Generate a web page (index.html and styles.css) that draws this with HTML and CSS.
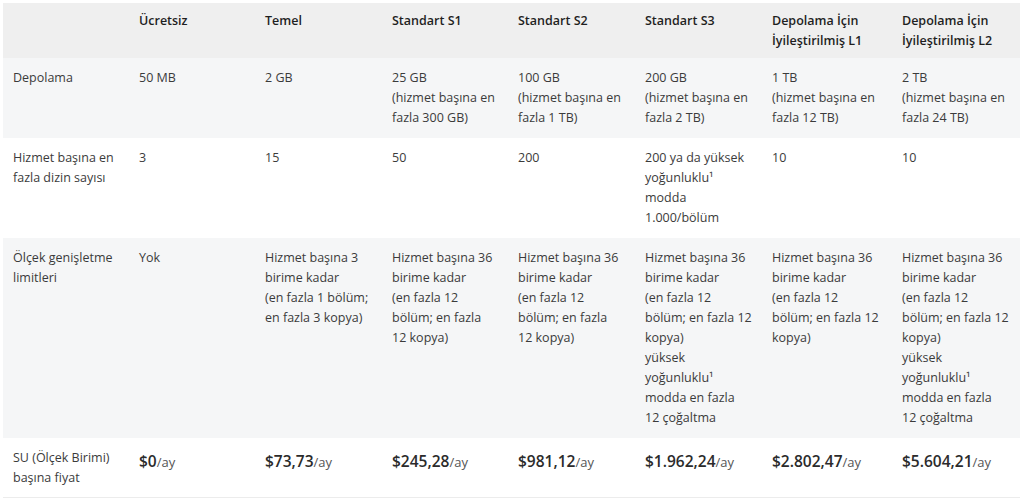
FILE: index.html
```html
<!DOCTYPE html>
<html lang="tr">
<head>
<meta charset="utf-8">
<link rel="stylesheet" href="styles.css">
</head>
<body>
<div class="wrap">
<table class="pricing">
  <colgroup>
    <col class="c0"><col class="c1"><col class="c2"><col class="c3"><col class="c4"><col class="c5"><col class="c6"><col class="c7">
  </colgroup>
  <thead>
    <tr>
      <th></th>
      <th>Ücretsiz</th>
      <th>Temel</th>
      <th>Standart S1</th>
      <th>Standart S2</th>
      <th>Standart S3</th>
      <th>Depolama İçin<br>İyileştirilmiş L1</th>
      <th>Depolama İçin<br>İyileştirilmiş L2</th>
    </tr>
  </thead>
  <tbody>
    <tr class="alt">
      <td>Depolama</td>
      <td>50 MB</td>
      <td>2 GB</td>
      <td>25 GB<br>(hizmet başına en<br>fazla 300 GB)</td>
      <td>100 GB<br>(hizmet başına en<br>fazla 1 TB)</td>
      <td>200 GB<br>(hizmet başına en<br>fazla 2 TB)</td>
      <td>1 TB<br>(hizmet başına en<br>fazla 12 TB)</td>
      <td>2 TB<br>(hizmet başına en<br>fazla 24 TB)</td>
    </tr>
    <tr>
      <td>Hizmet başına en<br>fazla dizin sayısı</td>
      <td>3</td>
      <td>15</td>
      <td>50</td>
      <td>200</td>
      <td>200 ya da yüksek<br>yoğunluklu¹<br>modda<br>1.000/bölüm</td>
      <td>10</td>
      <td>10</td>
    </tr>
    <tr class="alt">
      <td>Ölçek genişletme<br>limitleri</td>
      <td>Yok</td>
      <td>Hizmet başına 3<br>birime kadar<br>(en fazla 1 bölüm;<br>en fazla 3 kopya)</td>
      <td>Hizmet başına 36<br>birime kadar<br>(en fazla 12<br>bölüm; en fazla<br>12 kopya)</td>
      <td>Hizmet başına 36<br>birime kadar<br>(en fazla 12<br>bölüm; en fazla<br>12 kopya)</td>
      <td>Hizmet başına 36<br>birime kadar<br>(en fazla 12<br>bölüm; en fazla 12<br>kopya)<br>yüksek<br>yoğunluklu¹<br>modda en fazla<br>12 çoğaltma</td>
      <td>Hizmet başına 36<br>birime kadar<br>(en fazla 12<br>bölüm; en fazla 12<br>kopya)</td>
      <td>Hizmet başına 36<br>birime kadar<br>(en fazla 12<br>bölüm; en fazla 12<br>kopya)<br>yüksek<br>yoğunluklu¹<br>modda en fazla<br>12 çoğaltma</td>
    </tr>
    <tr class="price-row">
      <td>SU (Ölçek Birimi)<br>başına fiyat</td>
      <td><span class="amt">$0</span><span class="per">/ay</span></td>
      <td><span class="amt">$73,73</span><span class="per">/ay</span></td>
      <td><span class="amt">$245,28</span><span class="per">/ay</span></td>
      <td><span class="amt">$981,12</span><span class="per">/ay</span></td>
      <td><span class="amt">$1.962,24</span><span class="per">/ay</span></td>
      <td><span class="amt">$2.802,47</span><span class="per">/ay</span></td>
      <td><span class="amt">$5.604,21</span><span class="per">/ay</span></td>
    </tr>
  </tbody>
</table>
</div>
</body>
</html>
```

FILE: styles.css
```css
html, body {
  margin: 0;
  padding: 0;
  background: #ffffff;
}

.wrap {
  padding: 3px 4px 0 3px;
}

.pricing {
  width: 1017px;
  border-collapse: collapse;
  table-layout: fixed;
  font-family: "Open Sans", "Noto Sans", sans-serif;
  font-size: 12.5px;
  line-height: 20px;
  color: #3b3b3b;
}

.c0 { width: 126px; }
.c1 { width: 126px; }
.c2 { width: 127px; }
.c3 { width: 126px; }
.c4 { width: 127px; }
.c5 { width: 127px; }
.c6 { width: 130px; }
.c7 { width: 128px; }

.pricing th {
  background: #efefef;
  text-align: left;
  vertical-align: top;
  font-weight: 600;
  color: #1f1f1f;
  padding: 8px 10px 7px 10px;
  white-space: nowrap;
}

.pricing td {
  vertical-align: top;
  padding: 10px 10px 10px 10px;
  white-space: nowrap;
}

.pricing tr.alt td {
  background: #f5f6f7;
}

.pricing tbody tr:last-child td {
  border-bottom: 1px solid #ececec;
  padding-bottom: 9px;
}

.price-row .amt {
  font-size: 15.5px;
  font-weight: 600;
  color: #2b2b2b;
  position: relative;
  top: 3px;
}

.price-row .per {
  font-size: 13px;
  color: #555;
  position: relative;
  top: 3px;
}
```
